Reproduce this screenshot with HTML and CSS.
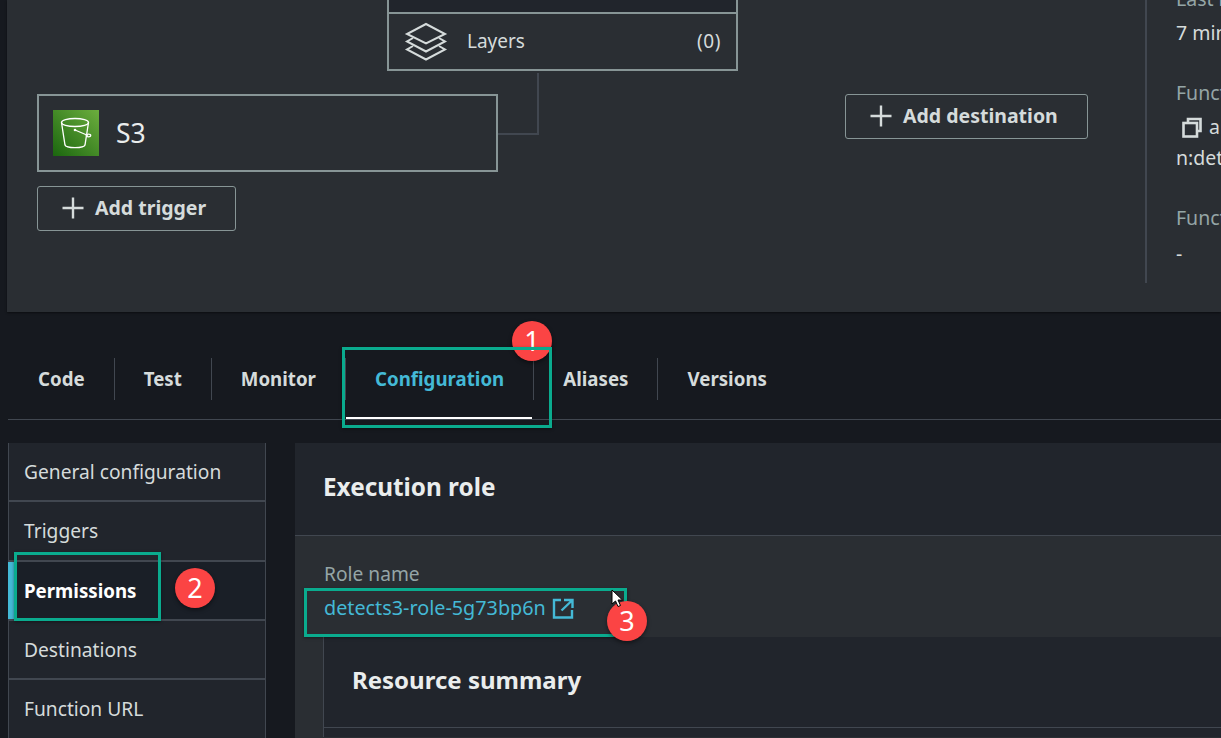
FILE: index.html
```html
<!DOCTYPE html>
<html lang="en">
<head>
  <meta charset="UTF-8" />
  <title>Lambda function configuration</title>
  <link rel="stylesheet" href="styles.css">
</head>
<body>

  <section class="overview">
    <div class="diagram">
      <div class="connector"></div>

      <div class="fn-box">
        <div class="fn-name"></div>
        <div class="layers-row">
          <svg class="layers-icon" width="44" height="40" viewBox="0 0 44 40" fill="none" stroke="#d5dbdb" stroke-width="2">
            <path d="M22 2 L41 12 L22 21.500 L3 12 Z"/>
            <path d="M9 16 L3 19.500 L22 29.500 L41 19.500 L35 16"/>
            <path d="M9 24 L3 27.500 L22 37.500 L41 27.500 L35 24"/>
          </svg>
          <span class="layers-label">Layers</span>
          <span class="layers-count">(0)</span>
        </div>
      </div>

      <div class="trigger-box">
        <svg class="s3-icon" width="46" height="46" viewBox="0 0 46 46">
          <defs>
            <linearGradient id="s3grad" x1="0" y1="1" x2="1" y2="0">
              <stop offset="0" stop-color="#1b660f"/>
              <stop offset="1" stop-color="#6cae3e"/>
            </linearGradient>
          </defs>
          <rect width="46" height="46" fill="url(#s3grad)"/>
          <g fill="none" stroke="#fff" stroke-width="1.300">
            <ellipse cx="22" cy="12.500" rx="13.500" ry="4"/>
            <path d="M8.500 12.500 L12 35 C13 38.500 31 38.500 32 35 L35.500 12.500"/>
            <path d="M22 20 L35 25.500"/>
            <ellipse cx="35.500" cy="25.500" rx="2.200" ry="1.300"/>
          </g>
          <circle cx="22" cy="20" r="1.300" fill="#fff"/>
        </svg>
        <span class="trigger-name">S3</span>
      </div>

      <button class="add-btn add-trigger">
        <svg width="22" height="22" viewBox="0 0 22 22" stroke="#d5dbdb" stroke-width="2.400"><path d="M11 0.500 V21.500 M0.500 11 H21.500"/></svg>
        Add trigger
      </button>

      <button class="add-btn add-destination">
        <svg width="22" height="22" viewBox="0 0 22 22" stroke="#d5dbdb" stroke-width="2.400"><path d="M11 0.500 V21.500 M0.500 11 H21.500"/></svg>
        Add destination
      </button>
    </div>

    <aside class="details">
      <div class="detail-label first">Last modified</div>
      <div class="detail-value">7 minutes ago</div>
      <div class="detail-label">Function ARN</div>
      <div class="detail-value arn">
        <svg width="20" height="21" viewBox="0 0 20 21" fill="none" stroke="#d5dbdb" stroke-width="2.600"><path d="M6 6 V2 H18.500 V14 H15"/><rect x="1.500" y="6" width="13.500" height="13.500"/></svg>
        arn:aws:lambda:us-east-1:123456789012:functio
      </div>
      <div class="detail-value wrapped">n:detects3</div>
      <div class="detail-label">Function URL</div>
      <div class="detail-value dash">-</div>
    </aside>
  </section>

  <nav class="tabs">
    <a class="tab">Code</a>
    <a class="tab">Test</a>
    <a class="tab">Monitor</a>
    <a class="tab active">Configuration</a>
    <a class="tab">Aliases</a>
    <a class="tab">Versions</a>
  </nav>

  <main class="config">
    <ul class="side-menu">
      <li>General configuration</li>
      <li>Triggers</li>
      <li class="active">Permissions</li>
      <li>Destinations</li>
      <li>Function URL</li>
    </ul>

    <section class="panel">
      <h2 class="panel-title">Execution role</h2>
      <div class="panel-body">
        <div class="role-label">Role name</div>
        <a class="role-link">detects3-role-5g73bp6n
          <svg width="22" height="21" viewBox="0 0 22 21" fill="none" stroke="#44b9d6" stroke-width="2.400"><path d="M9 2 H2 V19.500 H20 V12"/><path d="M12 2 H20.500 V10 M20 2.500 L9.500 12.500"/></svg>
        </a>
        <div class="summary">
          <h3 class="summary-title">Resource summary</h3>
        </div>
      </div>
    </section>
  </main>

  <!-- annotations drawn over the screenshot -->
  <div class="badge badge-1">1</div>
  <div class="mark mark-1"></div>
  <div class="mark mark-2"></div>
  <div class="mark mark-3"></div>
  <div class="badge badge-2">2</div>
  <div class="badge badge-3">3</div>
  <svg class="cursor" width="13" height="19" viewBox="0 0 13 19"><path d="M1 1 V15 L4.500 12 L7 17.500 L9.500 16.500 L7 11 H11.500 Z" fill="#fff" stroke="#000" stroke-width="1"/></svg>

</body>
</html>
```

FILE: styles.css
```css
html, body {
  height: 738px;
  overflow: hidden;
}
body {
  margin: 0;
  background: #16191f;
  color: #d5dbdb;
  font-family: "Noto Sans", sans-serif;
  font-size: 19.200px;
  position: relative;
}

/* top panel */
.overview {
  display: flex;
  height: 312px;
  margin-left: 7px;
  background: #2a2e33;
  box-shadow: 0 1px 2px rgba(0,0,0,0.5);
  overflow: hidden;
}
.diagram {
  position: relative;
  flex: 0 0 1138px;
}
.fn-box {
  position: absolute;
  left: 380px;
  top: 0;
  width: 351px;
  height: 71px;
  box-sizing: border-box;
  border: 2px solid #879596;
  border-top: none;
}
.fn-name {
  height: 12px;
  background: #21252c;
  border-bottom: 2px solid #879596;
}
.layers-row {
  display: flex;
  align-items: center;
  height: 55px;
  padding: 0 15px 0 15px;
}
.layers-label {
  margin: 0 0 2px 19px;
  font-size: 19px;
  flex: 1;
}
.layers-count {
  margin-bottom: 2px;
  font-size: 19px;
  letter-spacing: 0.6px;
}
.connector {
  position: absolute;
  left: 491px;
  top: 73px;
  width: 39px;
  height: 60px;
  border-right: 2px solid #414750;
  border-bottom: 2px solid #414750;
}
.trigger-box {
  position: absolute;
  left: 30px;
  top: 94px;
  width: 461px;
  height: 78px;
  box-sizing: border-box;
  border: 2px solid #879596;
  display: flex;
  align-items: center;
  padding-left: 14px;
}
.trigger-name {
  margin-left: 17px;
  font-size: 26.500px;
  color: #eaeded;
}
.add-btn {
  position: absolute;
  display: flex;
  align-items: center;
  gap: 11px;
  height: 45px;
  box-sizing: border-box;
  background: none;
  border: 1px solid #879596;
  border-radius: 3px;
  color: #d5dbdb;
  font-family: inherit;
  font-size: 19.500px;
  font-weight: 700;
  padding: 0 0 2px 24px;
}
.add-trigger {
  left: 30px;
  top: 186px;
  width: 199px;
}
.add-destination {
  left: 838px;
  top: 94px;
  width: 243px;
}

/* details column, cut off by the window */
.details {
  flex: 0 0 auto;
  height: 283px;
  box-sizing: border-box;
  border-left: 2px solid #414750;
  padding-left: 29px;
  white-space: nowrap;
  font-size: 19.500px;
}
.detail-label {
  color: #95a5a6;
  margin-top: 34px;
  line-height: 26px;
}
.detail-label.first {
  margin-top: -14px;
}
.detail-value {
  line-height: 26px;
  margin-top: 8px;
}
.detail-value.wrapped {
  margin-top: 5px;
}
.detail-value.dash {
  margin-top: 10px;
}
.arn {
  display: flex;
  align-items: center;
  gap: 7px;
  padding-left: 6px;
}

/* tabs */
.tabs {
  display: flex;
  align-items: flex-start;
  height: 108px;
  margin-left: 8px;
  padding: 46px 0 0 1px;
  box-sizing: border-box;
  border-bottom: 1px solid #414750;
}
.tab {
  font-weight: 700;
  font-size: 18.700px;
  line-height: 42px;
  padding: 0 29px;
  border-right: 1px solid #414750;
}
.tab:last-child {
  border-right: none;
}
.tab.active {
  color: #44b9d6;
  position: relative;
}
.tab.active::after {
  content: "";
  position: absolute;
  left: 0;
  right: 1px;
  bottom: -19px;
  height: 2px;
  background: #fff;
}

/* lower section */
.config {
  display: flex;
  gap: 29px;
  height: 295px;
  overflow: hidden;
  margin: 23px 0 0 8px;
}
.side-menu {
  list-style: none;
  margin: 0;
  padding: 0;
  flex: 0 0 258px;
  box-sizing: border-box;
  border-left: 1px solid #414750;
  border-right: 1px solid #414750;
}
.side-menu li {
  height: 59.330px;
  box-sizing: border-box;
  display: flex;
  align-items: center;
  padding-left: 15px;
  background: #21252c;
  border-bottom: 2px solid #414750;
}
.side-menu li.active {
  background: #1a1f27;
  color: #fff;
  font-size: 18.700px;
  font-weight: 700;
  margin-left: -1px;
  padding-left: 16px;
  box-shadow: inset 7px 0 0 #44b9d6;
}
.panel {
  flex: 1;
  background: #2a2e33;
}
.panel-title {
  margin: 0;
  height: 93px;
  padding: 0 0 5px 28px;
  box-sizing: border-box;
  display: flex;
  align-items: center;
  font-size: 24.300px;
  font-weight: 700;
  color: #eaeded;
  background: #21252c;
  border-bottom: 1px solid #414750;
}
.panel-body {
  padding: 25px 0 0 29px;
}
.role-label {
  color: #95a5a6;
  line-height: 26px;
}
.role-link {
  display: flex;
  align-items: center;
  gap: 6px;
  color: #44b9d6;
  font-size: 19.800px;
  line-height: 26px;
  margin-top: 8px;
}
.summary {
  margin: 16px 0 0 -1px;
  background: #21252c;
  border-left: 1px solid #414750;
  height: 100px;
}
.summary-title {
  margin: 0;
  height: 91px;
  padding: 0 0 6px 28px;
  display: flex;
  align-items: center;
  font-size: 24px;
  font-weight: 700;
  color: #eaeded;
  border-bottom: 1px solid #414750;
  box-sizing: border-box;
}

/* annotations */
.mark {
  position: absolute;
  box-sizing: border-box;
  border: 3px solid #0aab8e;
  box-shadow: 0 1px 3px rgba(0,0,0,0.4);
}
.mark-1 {
  left: 342px;
  top: 347px;
  width: 210px;
  height: 81px;
}
.mark-2 {
  left: 14px;
  top: 552px;
  width: 147px;
  height: 69px;
}
.mark-3 {
  left: 304px;
  top: 588px;
  width: 323px;
  height: 49px;
}
.badge {
  position: absolute;
  width: 40px;
  height: 40px;
  border-radius: 50%;
  background: #fb4444;
  color: #fff;
  font-size: 27px;
  line-height: 40px;
  text-align: center;
  box-shadow: 0 2px 4px rgba(0,0,0,0.45);
}
.badge-1 {
  left: 512px;
  top: 321px;
}
.badge-2 {
  left: 175px;
  top: 568px;
}
.badge-3 {
  left: 607px;
  top: 601px;
}
.cursor {
  position: absolute;
  left: 611px;
  top: 589px;
}
```
